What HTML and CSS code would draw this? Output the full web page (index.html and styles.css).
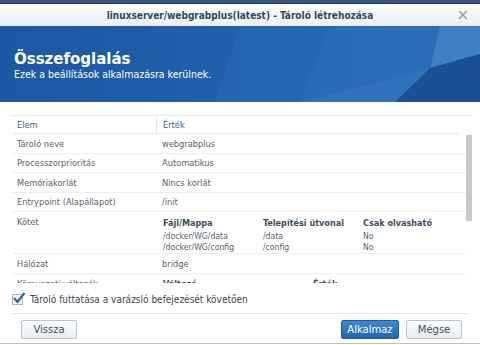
FILE: index.html
```html
<!DOCTYPE html>
<html lang="hu">
  <head>
    <meta charset="UTF-8" />
    <title>Tároló létrehozása</title>
    <link rel="stylesheet" href="styles.css">
  </head>
  <body>
    <div class="backdrop"></div>
    <div class="dialog">
      <div class="titlebar">
        <span class="title">linuxserver/webgrabplus(latest) - Tároló létrehozása</span>
        <svg class="close" width="10" height="10" viewBox="0 0 10 10">
          <path d="M1 1 L9 9 M9 1 L1 9" stroke="#8e99a3" stroke-width="1.3" />
        </svg>
      </div>

      <div class="banner">
        <svg class="facets" viewBox="0 0 480 76" preserveAspectRatio="none">
          <polygon points="240,0 330,0 300,76 215,76" fill="#2a6ab4" opacity="0.6" />
          <polygon points="330,0 440,0 430,42 300,76" fill="#2d6fb8" opacity="0.7" />
          <polygon points="440,0 480,0 480,28 430,42" fill="#4a8ccc" opacity="0.7" />
          <polygon points="430,42 480,28 480,76 395,76" fill="#17498a" opacity="0.7" />
          <polygon points="300,76 430,42 395,76" fill="#3a7dc2" opacity="0.6" />
        </svg>
        <h1>Összefoglalás</h1>
        <p>Ezek a beállítások alkalmazásra kerülnek.</p>
      </div>

      <div class="content">
        <div class="grid">
          <div class="grid-head">
            <div class="col-name">Elem</div>
            <div class="col-value">Érték</div>
          </div>
          <div class="grid-body">
            <div class="row">
              <div class="col-name">Tároló neve</div>
              <div class="col-value">webgrabplus</div>
            </div>
            <div class="row">
              <div class="col-name">Processzorprioritás</div>
              <div class="col-value">Automatikus</div>
            </div>
            <div class="row">
              <div class="col-name">Memóriakorlát</div>
              <div class="col-value">Nincs korlát</div>
            </div>
            <div class="row">
              <div class="col-name">Entrypoint (Alapállapot)</div>
              <div class="col-value">/init</div>
            </div>
            <div class="row tall">
              <div class="col-name">Kötet</div>
              <div class="col-value">
                <table class="sub">
                  <tr>
                    <th>Fájl/Mappa</th>
                    <th>Telepítési útvonal</th>
                    <th>Csak olvasható</th>
                  </tr>
                  <tr>
                    <td>/docker/WG/data</td>
                    <td>/data</td>
                    <td>No</td>
                  </tr>
                  <tr>
                    <td>/docker/WG/config</td>
                    <td>/config</td>
                    <td>No</td>
                  </tr>
                </table>
              </div>
            </div>
            <div class="row">
              <div class="col-name">Hálózat</div>
              <div class="col-value">bridge</div>
            </div>
            <div class="row tall">
              <div class="col-name">Környezeti változók</div>
              <div class="col-value">
                <table class="sub env">
                  <tr>
                    <th>Változó</th>
                    <th>Érték</th>
                  </tr>
                </table>
              </div>
            </div>
          </div>
          <div class="scrollbar"></div>
        </div>

        <label class="check">
          <span class="box">
            <svg width="14" height="12" viewBox="0 0 14 12">
              <path d="M2 6 L5.5 10 L12.5 1" fill="none" stroke="#2a62a6" stroke-width="2.2" />
            </svg>
          </span>
          Tároló futtatása a varázsló befejezését követően
        </label>

        <div class="footer">
          <button class="btn">Vissza</button>
          <span class="spacer"></span>
          <button class="btn primary">Alkalmaz</button>
          <button class="btn">Mégse</button>
        </div>
      </div>
    </div>
  </body>
</html>
```

FILE: styles.css
```css
* {
  box-sizing: border-box;
}
body {
  margin: 0;
  width: 480px;
  height: 345px;
  overflow: hidden;
  background: #fff;
  font-family: "DejaVu Sans", Verdana, sans-serif;
  font-stretch: condensed;
}
.backdrop {
  height: 4px;
  background: #34577c;
  border-bottom: 1px solid #1d3a5a;
}
.dialog {
  border-bottom: 1px solid #b9c0c6;
  height: 340px;
}
.titlebar {
  height: 22px;
  display: flex;
  align-items: center;
  justify-content: center;
  position: relative;
  background: linear-gradient(#fbfcfd, #eaeff3);
}
.title {
  font-size: 10px;
  font-weight: bold;
  color: #34475a;
}
.close {
  position: absolute;
  right: 12px;
  top: 6px;
}
.banner {
  height: 76px;
  position: relative;
  overflow: hidden;
  background: linear-gradient(90deg, #1d58a3, #2262ad 60%, #2465ae);
  color: #fff;
  padding: 24px 14px 0;
}
.facets {
  position: absolute;
  left: 0;
  top: 0;
  width: 100%;
  height: 100%;
}
.banner h1 {
  position: relative;
  margin: 0;
  font-size: 15px;
  line-height: 18px;
  font-stretch: normal;
}
.banner p {
  position: relative;
  margin: 0;
  font-size: 10.5px;
  line-height: 13px;
}
.content {
  padding: 13px 8px 0 12px;
}
.grid {
  position: relative;
  border-top: 1px solid #e6e9ec;
  height: 168px;
  overflow: hidden;
  font-size: 9.2px;
  color: #58626c;
}
.grid-head,
.row {
  display: flex;
  align-items: center;
  margin-right: 6px;
}
.grid-head {
  height: 18px;
  border-bottom: 1px solid #e9ecef;
  margin-right: 12px;
  color: #44607e;
}
.grid-head .col-value {
  border-left: 1px solid #e3e6e9;
  align-self: stretch;
  display: flex;
  align-items: center;
}
.row {
  height: 19.5px;
  border-bottom: 1px solid #eceef0;
}
.row.tall {
  height: 42px;
  align-items: flex-start;
}
.row.tall .col-name {
  padding-top: 4px;
}
.col-name {
  width: 144px;
  padding-left: 5px;
}
.col-value {
  flex: 1;
  padding-left: 6px;
}
.sub {
  border-collapse: collapse;
  margin-top: 5px;
}
.sub th {
  text-align: left;
  font-size: 9px;
  color: #3e4c5a;
  width: 100px;
  padding: 0 0 3px 1px;
  height: 14px;
}
.sub td {
  font-size: 8.6px;
  padding: 0 0 0 1px;
  line-height: 11px;
}
.env th:first-child {
  width: 150px;
}
.scrollbar {
  position: absolute;
  right: 0;
  top: 19px;
  width: 6px;
  height: 86px;
  background: #c9c9c9;
}
.check {
  display: flex;
  align-items: center;
  gap: 7px;
  height: 31px;
  padding-top: 2px;
  font-size: 10px;
  color: #3c4652;
  border-bottom: 1px solid #dfe3e7;
  margin-right: 4px;
}
.box {
  width: 11px;
  height: 11px;
  border: 1px solid #aab4be;
  background: #fff;
  position: relative;
}
.box svg {
  position: absolute;
  left: -1px;
  top: -3px;
}
.footer {
  display: flex;
  gap: 7px;
  padding: 6px 10px 0 9px;
}
.spacer {
  flex: 1;
}
.btn {
  font-family: inherit;
  font-size: 10px;
  height: 19px;
  width: 56px;
  padding: 0;
  border: 1px solid #bcc5ce;
  border-radius: 2px;
  background: linear-gradient(#fbfcfd, #e8edf1);
  color: #3d4f62;
}
.btn.primary {
  width: 58px;
  border-color: #1d5ba4;
  background: linear-gradient(#3f88d2, #2364ae);
  color: #fff;
}
```
